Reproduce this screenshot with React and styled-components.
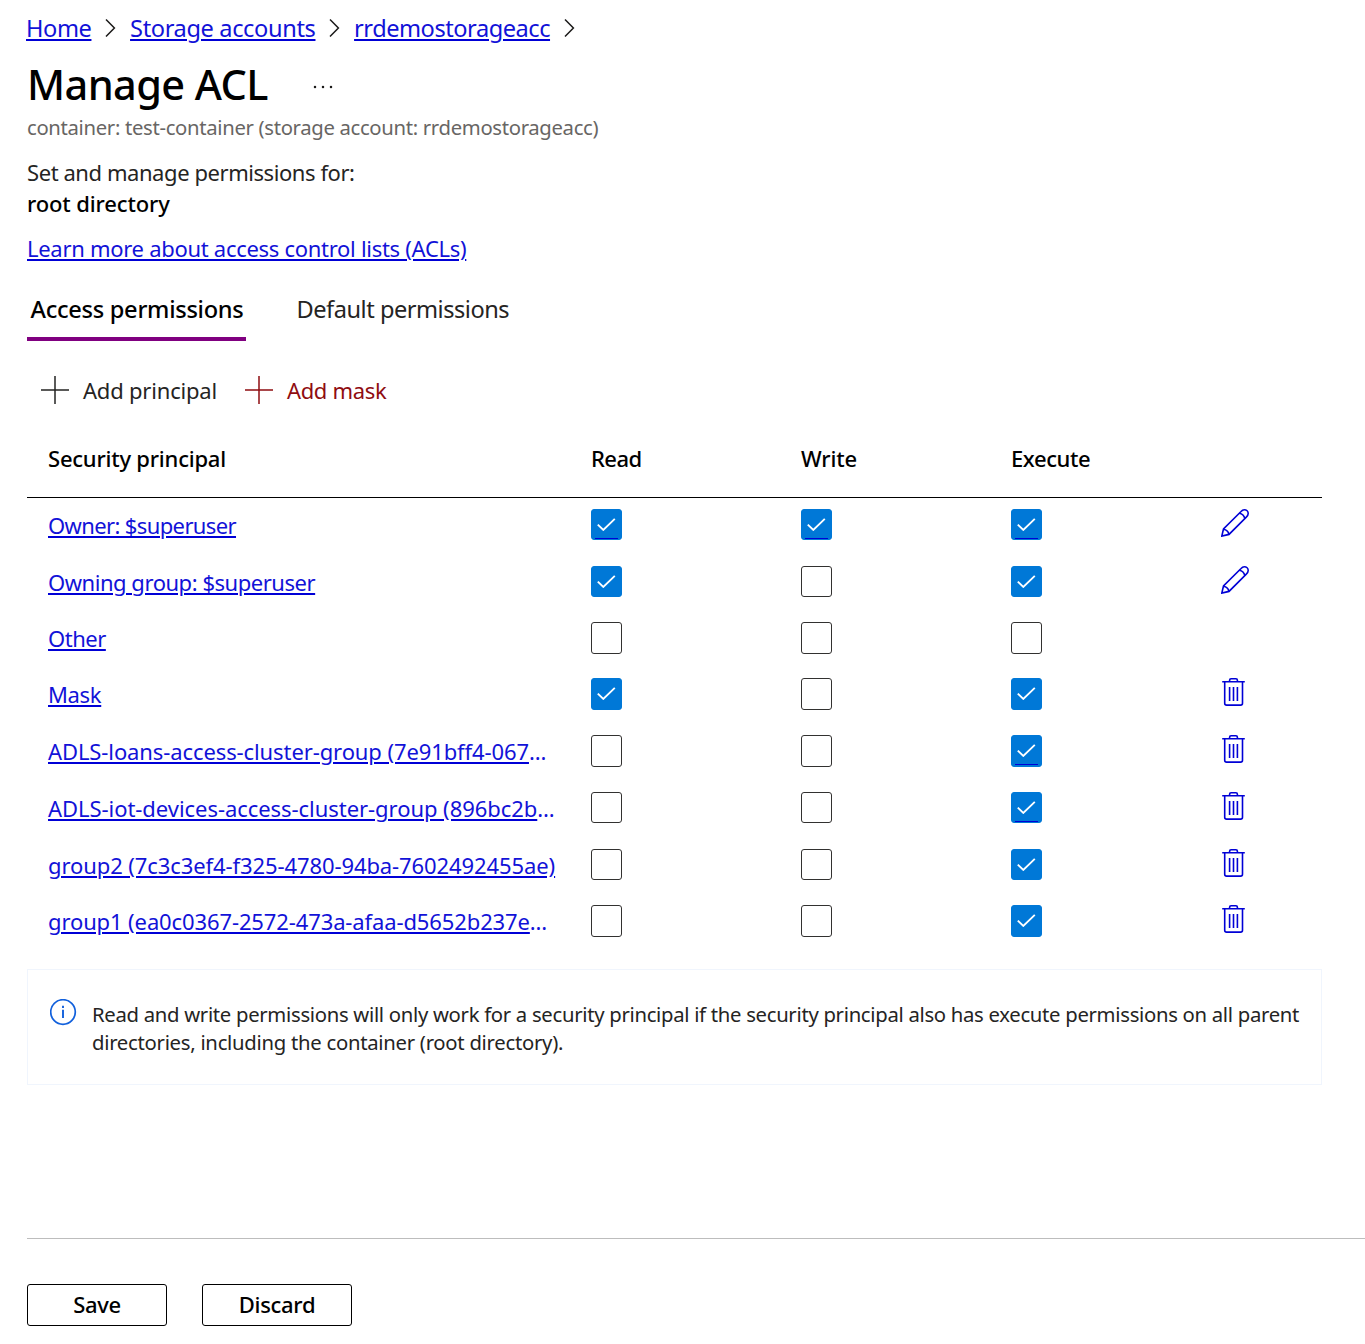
import React, { useState } from "react";
import styled, { createGlobalStyle } from "styled-components";

const LINK = "#0000d6";
const LINK_TEXT = "#1212d8";

const GlobalStyle = createGlobalStyle`
  * { box-sizing: border-box; }
  body {
    margin: 0;
    background: #fff;
    color: #252423;
    font-family: "Noto Sans", "Open Sans", sans-serif;
    font-size: 22px;
    line-height: 31px;
  }
  button { font-family: inherit; }
`;

const Page = styled.main`
  display: flex;
  flex-direction: column;
  height: 1344px;
  padding: 12px 0 18px 27px;
  overflow: hidden;
  white-space: nowrap;
`;

const Link = styled.a`
  color: ${LINK_TEXT};
  text-decoration: underline;
  text-decoration-color: ${LINK};
  text-decoration-thickness: 2px;
  text-underline-offset: 2px;
  letter-spacing: ${(p) => p.$track || 0}px;
  cursor: pointer;
`;

const Breadcrumb = styled.nav`
  display: flex;
  align-items: center;
  height: 32px;
  margin-left: -1px;
  font-size: 23.6px;
  line-height: 32px;
`;

const Chevron = styled.svg`
  width: 11px;
  height: 20px;
  margin: 0 14px 0 13.6px;
  fill: none;
  stroke: #1b1a19;
  stroke-width: 1.5;
`;

const TitleRow = styled.header`
  display: flex;
  align-items: center;
  gap: 45px;
  height: 56px;
  margin-top: 11px;
`;

const Title = styled.h1`
  margin: 0;
  padding-top: 1px;
  color: #000;
  font-size: 41.5px;
  font-weight: 500;
  line-height: 56px;
  letter-spacing: -0.6px;
`;

const Dots = styled.svg`
  width: 20px;
  height: 4px;
  margin-top: 7px;
  fill: #1b1a19;
`;

const Subtitle = styled.div`
  height: 28px;
  margin-top: 2px;
  color: #686664;
  font-size: 20.3px;
  line-height: 28px;
  letter-spacing: -0.325px;
`;

const Intro = styled.div`
  margin-top: 16px;
  letter-spacing: -0.43px;
`;

const Subject = styled.div`
  color: #000;
  font-weight: 500;
  letter-spacing: -0.13px;
`;

const LearnMore = styled.div`
  margin-top: 14px;
`;

const Tabs = styled.div`
  display: flex;
  gap: 47px;
  height: 50px;
  margin-top: 27px;
`;

const Tab = styled.button`
  height: 50px;
  padding: 0 2.5px 10px 3.5px;
  border: 0;
  border-bottom: 4px solid ${(p) => (p.$active ? "#800080" : "transparent")};
  background: none;
  color: ${(p) => (p.$active ? "#000" : "#252423")};
  font-size: 23.6px;
  font-weight: ${(p) => (p.$active ? 500 : 400)};
  line-height: 36px;
  letter-spacing: ${(p) => (p.$active ? -0.28 : -0.48)}px;
`;

const Toolbar = styled.div`
  display: flex;
  gap: 28px;
  height: 40px;
  margin: 29px 0 10px 14px;
`;

const Command = styled.button`
  display: flex;
  align-items: center;
  gap: 14px;
  padding: 0;
  border: 0;
  background: none;
  color: ${(p) => (p.$alert ? "#8f0c10" : "#252423")};
  font-size: 22px;
  letter-spacing: ${(p) => p.$track}px;
`;

const Plus = styled.svg`
  width: 28px;
  height: 28px;
  fill: none;
  stroke: currentColor;
  stroke-width: 1.5;
`;

const Table = styled.section`
  width: 1295px;
`;

const Row = styled.div`
  display: grid;
  grid-template-columns: 543px 210px 210px 210px 1fr;
  align-items: start;
  height: ${(p) => p.$height}px;
  padding: 11px 0 0 21px;
`;

const HeadRow = styled(Row)`
  align-items: center;
  padding-top: 0;
  border-bottom: 1px solid #000;
`;

const HeadCell = styled.div`
  color: #000;
  font-weight: 500;
  letter-spacing: ${(p) => p.$track}px;
`;

const Principal = styled.div`
  margin-top: 1px;
  color: ${LINK_TEXT};
  letter-spacing: -0.3px;
`;

const Box = styled.button`
  display: flex;
  flex-direction: column;
  align-items: center;
  width: 31px;
  height: ${(p) => p.$size}px;
  padding: 0;
  border: 1px solid ${(p) => (p.$on ? "#0078d7" : "#323130")};
  border-radius: 3px;
  background: ${(p) => (p.$on ? "#0078d7" : "#fff")};
`;

const Tick = styled.svg`
  width: 19px;
  height: 13px;
  margin-top: 8px;
  flex: none;
  fill: none;
  stroke: #fff;
  stroke-width: 1.9;
`;

const TickRule = styled.span`
  width: 23px;
  height: 1px;
  margin-top: 7px;
  flex: none;
  background: ${LINK};
`;

const RowIcon = styled.svg`
  width: ${(p) => p.$width}px;
  height: 28px;
  margin-left: ${(p) => p.$indent || 0}px;
  fill: none;
  stroke: ${LINK};
  stroke-width: 1.6;
`;

const Notice = styled.section`
  display: flex;
  gap: 15px;
  width: 1295px;
  height: 116px;
  margin-top: 18px;
  padding: 29px 0 0 22px;
  border: 1px solid #f0f5fd;
  font-size: 20.3px;
  line-height: 28px;
`;

const InfoIcon = styled.svg`
  width: 27px;
  height: 27px;
  fill: none;
  stroke: #1160dc;
`;

const NoticeText = styled.div`
  padding-top: 1px;
`;

const NoticeLine = styled.div`
  letter-spacing: ${(p) => p.$track}px;
`;

const Footer = styled.footer`
  display: flex;
  gap: 35px;
  margin-top: auto;
  padding-top: 45px;
  border-top: 1px solid #bdbdbd;
`;

const FooterButton = styled.button`
  width: ${(p) => p.$width}px;
  height: 42px;
  padding: 0 0 2px;
  border: 1px solid #000;
  border-radius: 3px;
  background: #fff;
  color: #000;
  font-size: 22px;
  font-weight: 500;
  line-height: 38px;
  letter-spacing: -0.3px;
`;

const rows = [
  { name: "Owner: $superuser", track: -0.62, perms: [1, 1, 1], icon: "edit", height: 57, box: 31, rule: true },
  { name: "Owning group: $superuser", track: -0.46, perms: [1, 0, 1], icon: "edit", height: 56, box: 31 },
  { name: "Other", track: -0.48, perms: [0, 0, 0], height: 56, box: 32 },
  { name: "Mask", track: -0.34, perms: [1, 0, 1], icon: "delete", height: 57, box: 32 },
  { name: "ADLS-loans-access-cluster-group (7e91bff4-067", cut: true, track: -0.1, perms: [0, 0, 1], icon: "delete", height: 57, box: 32, rule: true },
  { name: "ADLS-iot-devices-access-cluster-group (896bc2b", cut: true, track: -0.05, perms: [0, 0, 1], icon: "delete", height: 57, box: 31, rule: true },
  { name: "group2 (7c3c3ef4-f325-4780-94ba-7602492455ae)", track: -0.09, perms: [0, 0, 1], icon: "delete", height: 56, box: 31 },
  { name: "group1 (ea0c0367-2572-473a-afaa-d5652b237e", cut: true, track: -0.115, perms: [0, 0, 1], icon: "delete", height: 57, box: 32 },
];

function Separator() {
  return (
    <Chevron viewBox="0 0 11 20">
      <path d="M1 1.5 9.4 10 1 18.5" />
    </Chevron>
  );
}

function PlusIcon() {
  return (
    <Plus viewBox="0 0 28 28">
      <path d="M14 0V28M0 14H28" />
    </Plus>
  );
}

function Checkbox({ initial, size, rule }) {
  const [on, setOn] = useState(!!initial);
  return (
    <Box $on={on} $size={size} role="checkbox" aria-checked={on} onClick={() => setOn(!on)}>
      {on && (
        <Tick viewBox="0 0 19 13">
          <path d="M.8 6.6 6.3 11.9 17.8.9" />
        </Tick>
      )}
      {on && rule && <TickRule />}
    </Box>
  );
}

function EditIcon() {
  return (
    <RowIcon $width={28} viewBox="0 0 28 28">
      <path d="M.8 27.1 2.5 20 19.8 2.7C21.1 1.3 22.2.8 23.3.8 25.5.8 27.2 2.5 27.2 4.6 27.2 5.7 26.7 6.8 25.3 8.1L8 25.4Z" />
      <path d="M18.3 4.2C21.2 4.8 23.2 6.8 23.8 9.6M2.5 20.2C5.4 20.7 7.4 22.5 7.9 25.3" />
    </RowIcon>
  );
}

function DeleteIcon() {
  return (
    <RowIcon $width={23} $indent={1} viewBox="0 0 23 28">
      <path d="M.2 3.8H22.8M7.6 4V2.3Q7.6.8 9.1.8H13.9Q15.4.8 15.4 2.3V4M2.7 4V25.2Q2.7 27.1 4.6 27.1H18.6Q20.5 27.1 20.5 25.2V4M7.6 9V23M11.5 9V23M15.4 9V23" />
    </RowIcon>
  );
}

export default function App() {
  return (
    <>
      <GlobalStyle />
      <Page>
        <Breadcrumb>
          <Link $track={-0.42}>Home</Link>
          <Separator />
          <Link $track={-0.37}>Storage accounts</Link>
          <Separator />
          <Link $track={-0.47}>rrdemostorageacc</Link>
          <Separator />
        </Breadcrumb>
        <TitleRow>
          <Title>Manage ACL</Title>
          <Dots viewBox="0 0 20 4">
            <circle cx="2" cy="2" r="1.25" />
            <circle cx="10" cy="2" r="1.25" />
            <circle cx="18" cy="2" r="1.25" />
          </Dots>
        </TitleRow>
        <Subtitle>container: test-container (storage account: rrdemostorageacc)</Subtitle>
        <Intro>Set and manage permissions for:</Intro>
        <Subject>root directory</Subject>
        <LearnMore>
          <Link $track={-0.29}>Learn more about access control lists (ACLs)</Link>
        </LearnMore>
        <Tabs>
          <Tab $active>Access permissions</Tab>
          <Tab>Default permissions</Tab>
        </Tabs>
        <Toolbar>
          <Command $track={-0.2}>
            <PlusIcon />
            Add principal
          </Command>
          <Command $alert $track={-0.32}>
            <PlusIcon />
            Add mask
          </Command>
        </Toolbar>
        <Table>
          <HeadRow $height={78}>
            <HeadCell $track={-0.22}>Security principal</HeadCell>
            <HeadCell $track={-0.55}>Read</HeadCell>
            <HeadCell $track={-0.15}>Write</HeadCell>
            <HeadCell $track={-0.4}>Execute</HeadCell>
          </HeadRow>
          {rows.map((row) => (
            <Row key={row.name} $height={row.height}>
              <Principal>
                <Link $track={row.track}>{row.name}</Link>
                {row.cut && "…"}
              </Principal>
              {row.perms.map((on, i) => (
                <Checkbox key={i} initial={on} size={row.box} rule={row.rule} />
              ))}
              {row.icon === "edit" && <EditIcon />}
              {row.icon === "delete" && <DeleteIcon />}
            </Row>
          ))}
        </Table>
        <Notice>
          <InfoIcon viewBox="0 0 27 27">
            <circle cx="13" cy="13" r="12.3" strokeWidth="1.7" />
            <path d="M13 10.8V19M13 6.8V8.9" strokeWidth="1.9" />
          </InfoIcon>
          <NoticeText>
            <NoticeLine $track={-0.297}>
              Read and write permissions will only work for a security principal if the security principal also has execute permissions on all parent
            </NoticeLine>
            <NoticeLine $track={-0.27}>directories, including the container (root directory).</NoticeLine>
          </NoticeText>
        </Notice>
        <Footer>
          <FooterButton $width={140}>Save</FooterButton>
          <FooterButton $width={150}>Discard</FooterButton>
        </Footer>
      </Page>
    </>
  );
}
